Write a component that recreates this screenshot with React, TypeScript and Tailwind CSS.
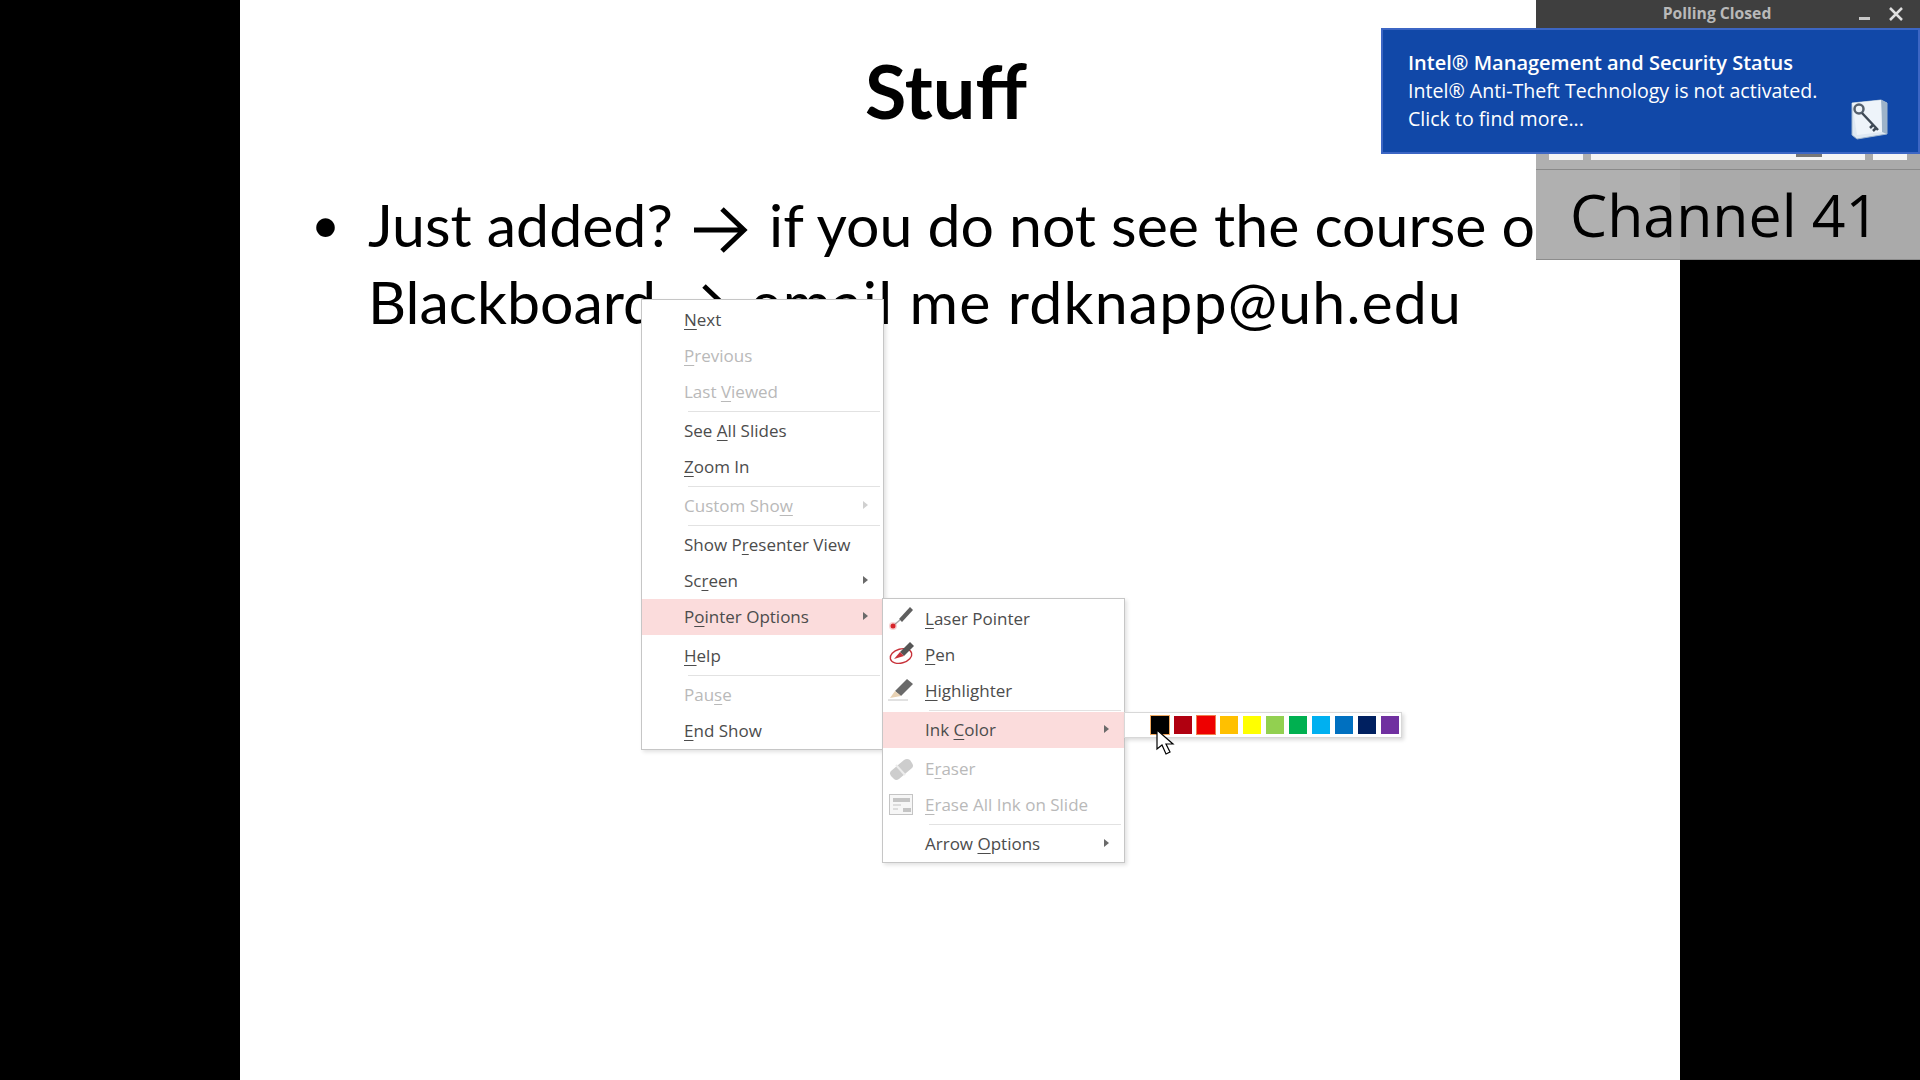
import React from 'react';

// access key gets underlined, same as the PowerPoint menu
function Label({ text, hot }: { text: string; hot?: number }) {
  if (hot === undefined) return <span>{text}</span>;
  return (
    <span>
      {text.slice(0, hot)}
      <u className="underline-offset-[3px] decoration-1">{text[hot]}</u>
      {text.slice(hot + 1)}
    </span>
  );
}

function Caret({ faded }: { faded?: boolean }) {
  return (
    <svg width="5" height="8" viewBox="0 0 5 8" className="absolute right-[15px] top-[13px]">
      <path d="M0 0 L5 4 L0 8 Z" fill={faded ? '#d0d0d0' : '#6a6a6a'} />
    </svg>
  );
}

type Item = {
  text?: string;
  hot?: number;
  off?: boolean;
  on?: boolean;
  more?: boolean;
  icon?: React.ReactNode;
  sep?: boolean;
  blank?: boolean;
};

function MenuRows({ items }: { items: Item[] }) {
  return (
    <>
      {items.map((it, i) =>
        it.sep ? (
          <div key={i} className="h-[3px] ml-[46px] mr-[3px] flex items-center">
            {!it.blank && <div className="h-px w-full bg-[#e2e2e2]" />}
          </div>
        ) : (
          <div
            key={i}
            className={`relative h-9 pl-[42px] pb-[1px] flex items-center whitespace-nowrap ${it.on ? 'bg-[#fbdcdc]' : ''} ${it.off ? 'text-[#b9b9b9]' : 'text-[#4c4c4c]'}`}
          >
            {it.icon && <div className="absolute left-[4px] top-[4px] w-7 h-7">{it.icon}</div>}
            <Label text={it.text!} hot={it.hot} />
            {it.more && <Caret faded={it.off} />}
          </div>
        )
      )}
    </>
  );
}

const LaserIcon = (
  <svg viewBox="0 0 28 28" className="w-7 h-7">
    <path d="M12 14 L23 2 L26 5 L15 17 Z" fill="#5f5f5f" />
    <path d="M13 15 L7 20" stroke="#a8a8a8" strokeWidth="1.5" />
    <circle cx="6" cy="21" r="2.5" fill="#d8232a" />
    <circle cx="6" cy="21" r="4" fill="#d8232a" opacity="0.2" />
  </svg>
);

const PenIcon = (
  <svg viewBox="0 0 28 28" className="w-7 h-7">
    <ellipse cx="14" cy="15" rx="11" ry="7" fill="none" stroke="#c8323a" strokeWidth="1.4" transform="rotate(-15 14 15)" />
    <path d="M13 11 L23 1 L27 5 L17 15 Z" fill="#555" />
    <path d="M13 11 L7 18 L17 15 Z" fill="#c8323a" />
  </svg>
);

const HighlighterIcon = (
  <svg viewBox="0 0 28 28" className="w-7 h-7">
    <path d="M8 14 L20 2 L26 7 L14 19 Z" fill="#6a6a6a" />
    <path d="M8 14 L3 21 L14 19 Z" fill="#e8d2b4" />
    <path d="M1 23 H21" stroke="#c4c4c4" strokeWidth="1" />
  </svg>
);

const EraserIcon = (
  <svg viewBox="0 0 28 28" className="w-7 h-7">
    <path d="M4 16 L17 5 Q20 3 23 5 L25 8 Q27 11 25 13 L12 24 Q9 26 7 24 L4 21 Q2 18 4 16 Z" fill="#cdcdcd" />
    <path d="M9 10 L18 20" stroke="#ececec" strokeWidth="2" />
  </svg>
);

const EraseAllIcon = (
  <svg viewBox="0 0 28 28" className="w-7 h-7">
    <rect x="2.5" y="3.5" width="23" height="20" fill="#f6f6f6" stroke="#c4c4c4" />
    <rect x="6" y="7" width="17" height="4" fill="#c4c4c4" />
    <path d="M6 14 H14 M6 18 H11" stroke="#d4d4d4" strokeWidth="1.5" />
    <rect x="16" y="17" width="8" height="4" fill="#c4c4c4" />
  </svg>
);

const mainItems: Item[] = [
  { text: 'Next', hot: 0 },
  { text: 'Previous', hot: 0, off: true },
  { text: 'Last Viewed', hot: 5, off: true },
  { sep: true },
  { text: 'See All Slides', hot: 4 },
  { text: 'Zoom In', hot: 0 },
  { sep: true },
  { text: 'Custom Show', hot: 10, off: true, more: true },
  { sep: true },
  { text: 'Show Presenter View', hot: 6 },
  { text: 'Screen', hot: 2, more: true },
  { text: 'Pointer Options', hot: 1, on: true, more: true },
  { sep: true, blank: true },
  { text: 'Help', hot: 0 },
  { sep: true },
  { text: 'Pause', hot: 3, off: true },
  { text: 'End Show', hot: 0 },
];

const pointerItems: Item[] = [
  { text: 'Laser Pointer', hot: 0, icon: LaserIcon },
  { text: 'Pen', hot: 0, icon: PenIcon },
  { text: 'Highlighter', hot: 0, icon: HighlighterIcon },
  { sep: true },
  { text: 'Ink Color', hot: 4, on: true, more: true },
  { sep: true, blank: true },
  { text: 'Eraser', hot: 1, off: true, icon: EraserIcon },
  { text: 'Erase All Ink on Slide', hot: 0, off: true, icon: EraseAllIcon },
  { sep: true },
  { text: 'Arrow Options', hot: 6, more: true },
];

const inkColors = [
  { c: '#ffffff', ring: '' },
  { c: '#000000', ring: 'outline-[#f0a860]' },
  { c: '#b00010', ring: '' },
  { c: '#ee0000', ring: 'outline-[#f08050]' },
  { c: '#ffc000', ring: '' },
  { c: '#ffff00', ring: '' },
  { c: '#92d050', ring: '' },
  { c: '#00b050', ring: '' },
  { c: '#00b0f0', ring: '' },
  { c: '#0070c0', ring: '' },
  { c: '#002060', ring: '' },
  { c: '#7030a0', ring: '' },
];

function Arrow({ className }: { className: string }) {
  return (
    <svg viewBox="0 0 54 46" className={className}>
      <path d="M0 23 H50 M28 2 L50 23 L28 44" fill="none" stroke="#000" strokeWidth="5" />
    </svg>
  );
}

function Slide() {
  return (
    <main className="relative w-[1440px] h-full bg-white text-black overflow-hidden font-['Lato','Liberation_Sans',sans-serif]">
      <h1 className="mr-[28px] pt-[43px] text-center text-[75.5px] leading-[94px] font-bold">Stuff</h1>
      <div className="mt-[49px] ml-[71px] flex text-[59px] leading-[77px] whitespace-nowrap">
        <span className="w-[57px] text-[50px]">•</span>
        <div>
          <div>
            Just added? <Arrow className="inline-block w-[54px] h-[46px] mx-[6px] align-[-6px]" /> if you do not see the course on
          </div>
          <div>
            Blackboard <Arrow className="inline-block w-[54px] h-[46px] mx-[5px] align-[-6px]" /> <span className="tracking-[1.17px]">email me rdknapp@uh.edu</span>
          </div>
        </div>
      </div>
    </main>
  );
}

function ChannelPanel() {
  return (
    <div className="absolute left-[1536px] top-0 w-[384px] h-[260px] flex flex-col bg-[linear-gradient(90deg,#b0b0b0_144px,#aaaaaa_144px)] border-b border-[#8c8c8c]">
      <div className="relative h-7 pr-[22px] pb-[1px] bg-[#3f3f3f] flex items-center justify-center text-[15.7px] font-bold text-[#b9b9b9] font-['Open_Sans',sans-serif]">
        Polling Closed
        <div className="absolute left-[323px] top-[17px] w-[11px] h-[3px] bg-[#c8c8c8]" />
        <svg width="14" height="14" viewBox="0 0 14 14" className="absolute left-[353px] top-[7px]">
          <path d="M1 1 L13 13 M13 1 L1 13" stroke="#e0e0e0" strokeWidth="2.5" />
        </svg>
      </div>
      <div className="relative h-[142px] border-b border-[#8a8a8a]">
        <div className="absolute left-[13px] right-[13px] top-[110px] h-[22px] flex gap-[8px]">
          <div className="w-[34px] bg-[#f4f4f4]" />
          <div className="relative flex-1 bg-[#f4f4f4]">
            <div className="absolute left-[205px] top-[15px] w-[26px] h-[4px] bg-[#777]" />
          </div>
          <div className="w-[34px] bg-[#f4f4f4]" />
        </div>
      </div>
      <div className="flex-1 pl-[34px] pt-[2px] text-[59px] leading-[84px] text-black font-['Open_Sans',sans-serif]">Channel 41</div>
    </div>
  );
}

function IntelToast() {
  return (
    <div className="absolute left-[1381px] top-[28px] w-[539px] h-[126px] bg-[#1148a8] border-2 border-[#3c66c4] pl-[25px] pt-[19px] text-white text-[19.6px] leading-[28px] font-['Open_Sans',sans-serif]">
      <div className="text-[20px] font-semibold">Intel® Management and Security Status</div>
      <div>Intel® Anti-Theft Technology is not activated.</div>
      <div>Click to find more...</div>
      <svg width="40" height="44" viewBox="0 0 40 44" className="absolute left-[466px] top-[67px]">
        <path d="M3 6 L32 3 L38 6 L38 37 L8 42 L3 38 Z" fill="#dfe9f3" stroke="#9fb6cf" />
        <path d="M32 3 L38 6 L38 37 L33 35 Z" fill="#9db3c9" />
        <path d="M3 6 L32 3 L33 35 L8 38 Z" fill="#eef4fa" />
        <circle cx="10" cy="12" r="4.5" fill="none" stroke="#56616e" strokeWidth="2.5" />
        <path d="M13 16 L29 33 M24 28 L21 31 M27 31 L24 34" stroke="#3f4a56" strokeWidth="2.5" fill="none" />
      </svg>
    </div>
  );
}

export default function App() {
  return (
    <div className="relative w-[1920px] h-[1080px] overflow-hidden bg-black flex justify-center font-['Open_Sans',sans-serif]">
      <Slide />
      <ChannelPanel />
      <IntelToast />

      {/* slide show right click menu */}
      <div className="absolute left-[641px] top-[299px] w-[243px] pt-[2px] bg-white border border-[#c6c6c6] shadow-[2px_2px_4px_rgba(0,0,0,0.12)] text-[17px]">
        <MenuRows items={mainItems} />
      </div>
      <div className="absolute left-[882px] top-[598px] w-[243px] pt-[2px] bg-white border border-[#c6c6c6] shadow-[2px_2px_4px_rgba(0,0,0,0.12)] text-[17px]">
        <MenuRows items={pointerItems} />
      </div>

      {/* ink colour strip */}
      <div className="absolute left-[1124px] top-[712px] w-[278px] h-[26px] pl-[3px] flex items-center gap-[5px] bg-white border border-[#d8d8d8] shadow-[2px_2px_4px_rgba(0,0,0,0.15)]">
        {inkColors.map((k, i) => (
          <div
            key={i}
            className={`w-[18px] h-[18px] ${k.ring ? `outline-1 ${k.ring}` : ''}`}
            style={{ backgroundColor: k.c }}
          />
        ))}
      </div>

      {/* mouse pointer */}
      <svg width="20" height="28" viewBox="0 0 20 28" className="absolute left-[1156px] top-[729px]">
        <path d="M1 1 L1 20 L6 16 L10 25 L14 23 L10 15 L17 15 Z" fill="#fff" stroke="#000" strokeWidth="1.2" />
      </svg>
    </div>
  );
}
